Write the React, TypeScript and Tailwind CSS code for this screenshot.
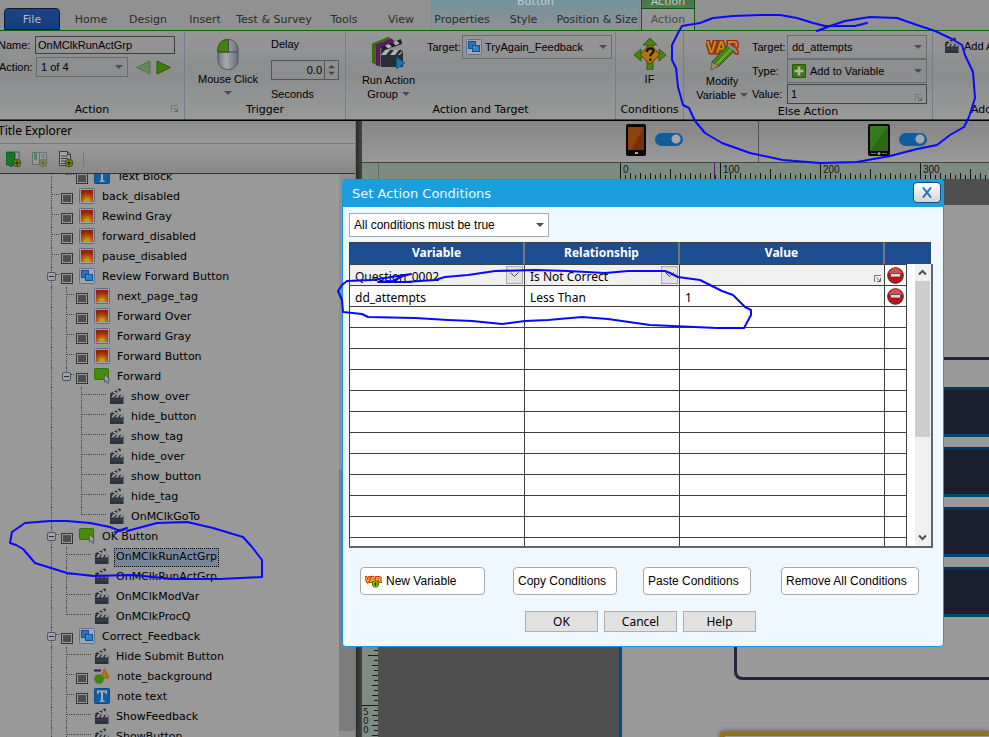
import React from 'react';
import { clsx } from 'clsx';

type Kind = 'image' | 'group' | 'text' | 'shape' | 'button' | 'action'

// t = branch, l = last branch, e = expander, x = last expander, v = line only, '' = blank
type Guide = 't' | 'l' | 'e' | 'x' | 'v' | ''

const nodes: { name: string, kind: Kind, guides: Guide[], selected?: boolean }[] = [
    { name: 'Text Block', kind: 'text', guides: ['v', 'l'] },
    { name: 'back_disabled', kind: 'image', guides: ['t'] },
    { name: 'Rewind Gray', kind: 'image', guides: ['t'] },
    { name: 'forward_disabled', kind: 'image', guides: ['t'] },
    { name: 'pause_disabled', kind: 'image', guides: ['t'] },
    { name: 'Review Forward Button', kind: 'group', guides: ['e'] },
    { name: 'next_page_tag', kind: 'image', guides: ['v', 't'] },
    { name: 'Forward Over', kind: 'image', guides: ['v', 't'] },
    { name: 'Forward Gray', kind: 'image', guides: ['v', 't'] },
    { name: 'Forward Button', kind: 'image', guides: ['v', 't'] },
    { name: 'Forward', kind: 'button', guides: ['v', 'x'] },
    { name: 'show_over', kind: 'action', guides: ['v', '', 't'] },
    { name: 'hide_button', kind: 'action', guides: ['v', '', 't'] },
    { name: 'show_tag', kind: 'action', guides: ['v', '', 't'] },
    { name: 'hide_over', kind: 'action', guides: ['v', '', 't'] },
    { name: 'show_button', kind: 'action', guides: ['v', '', 't'] },
    { name: 'hide_tag', kind: 'action', guides: ['v', '', 't'] },
    { name: 'OnMClkGoTo', kind: 'action', guides: ['v', '', 'l'] },
    { name: 'OK Button', kind: 'button', guides: ['e'] },
    { name: 'OnMClkRunActGrp', kind: 'action', guides: ['v', 't'], selected: true },
    { name: 'OnMClkRunActGrp', kind: 'action', guides: ['v', 't'] },
    { name: 'OnMClkModVar', kind: 'action', guides: ['v', 't'] },
    { name: 'OnMClkProcQ', kind: 'action', guides: ['v', 'l'] },
    { name: 'Correct_Feedback', kind: 'group', guides: ['e'] },
    { name: 'Hide Submit Button', kind: 'action', guides: ['v', 't'] },
    { name: 'note_background', kind: 'shape', guides: ['v', 't'] },
    { name: 'note text', kind: 'text', guides: ['v', 't'] },
    { name: 'ShowFeedback', kind: 'action', guides: ['v', 't'] },
    { name: 'ShowButton', kind: 'action', guides: ['v', 't'] },
]

function ClapperIcon() {
    return (
        <svg width="14" height="16" viewBox="0 0 14 16" className="shrink-0">
            <path d="M0 5.5 10 .3l1.2 2.2L1 7.2z" fill="#23272e" />
            <path d="M2.6 4.2l2 1.4 1.8-.9-2-1.5zM6 2.4l2.1 1.5 1.7-.8L7.800 1.500z" fill="#a9a9a9" />
            <path d="M0 6.800h13.500V16H0z" fill="#2b333f" />
            <path d="M3 6.800h2.500L3.800 9.500H1.200zM7.200 6.800h2.500L8 9.500H5.400zM11.300 6.800h2.200v.6l-1.300 2.100H9.700z" fill="#9c9c9c" />
            <path d="M1 12h12" stroke="#3c4653" />
        </svg>
    )
}

function GroupIcon() {
    return (
        <svg width="16" height="16" viewBox="0 0 16 16" className="shrink-0">
            <rect x=".5" y=".5" width="15" height="15" rx="1" fill="#a3a6ab" stroke="#66718a" />
            <rect x="2.500" y="2.500" width="7" height="7" fill="#2d73b8" stroke="#114f95" />
            <rect x="6.500" y="6.500" width="7" height="6" fill="#2f7fc4" stroke="#114f95" />
            <path d="M7 7h2.500v2.500H7z" fill="#3f95cf" />
        </svg>
    )
}

function NodeIcon({ kind }: { kind: Kind }) {
    if (kind === 'action') return <ClapperIcon />
    if (kind === 'group') return <GroupIcon />
    return (
        <svg width="16" height="16" viewBox="0 0 16 16" className="shrink-0">
            {kind === 'image' && <>
                <defs>
                    <radialGradient id="sunset" cx=".5" cy=".95" r=".85">
                        <stop offset="0" stopColor="#b5a522" />
                        <stop offset=".3" stopColor="#bd8119" />
                        <stop offset=".6" stopColor="#b34a10" />
                        <stop offset="1" stopColor="#941f02" />
                    </radialGradient>
                </defs>
                <rect x=".5" y=".5" width="15" height="15" rx="1" fill="#a3a3a3" stroke="#5e6b85" />
                <rect x="2" y="2" width="12" height="12" fill="url(#sunset)" />
                <path d="M5 14a3 3.500 0 0 1 6 0z" fill="#aaa422" />
            </>}
            {kind === 'text' && <>
                <rect x=".5" y=".5" width="15" height="15" rx="1" fill="#135ca0" stroke="#0c4c89" />
                <path d="M3 2.500h10V6h-1.200l-.6-1.800H9v8.300l1.500.4v1.100h-5v-1.100l1.500-.4V4.200H4.800L4.200 6H3z" fill="#a9adb1" />
            </>}
            {kind === 'shape' && <>
                <path d="M0 2.500h7" stroke="#3a0f6b" strokeWidth="2" />
                <path d="M10.500.5 15 10H7z" fill="#ad7d00" stroke="#a35b10" />
                <circle cx="5" cy="11" r="4.800" fill="#3d8410" />
            </>}
            {kind === 'button' && <>
                <rect x=".5" y=".5" width="14" height="11" rx="1" fill="#478c0d" stroke="#356f09" />
                <path d="M10.500 6v8l1.800-1.500 1.200 3 1.500-.7-1.200-2.800h2z" fill="#a5a9ae" stroke="#4a5262" strokeWidth=".8" />
            </>}
        </svg>
    )
}

function TreeGuide({ guide }: { guide: Guide }) {
    const half = guide === 'l' || guide === 'x'
    return (
        <span className="relative w-[15px] h-5 shrink-0">
            {guide !== '' && <span className={clsx('absolute left-[7px] top-0 border-l border-dotted border-[#444]', half ? 'h-2' : 'h-5')} />}
            {guide !== '' && guide !== 'v' && <span className="absolute left-[7px] top-[7px] w-2 border-t border-dotted border-[#444]" />}
            {(guide === 'e' || guide === 'x') &&
                <button aria-label="Collapse" className="absolute left-[3px] top-[5px] w-[9px] h-[9px] rounded-xs border border-[#4d5666] bg-[#9fa3a8] flex items-center justify-center">
                    <span className="w-[5px] h-px bg-[#1a2a48]" />
                </button>}
        </span>
    )
}

function TreeRow({ name, kind, guides, selected = false }: { name: string, kind: Kind, guides: Guide[], selected?: boolean }) {
    return (
        <li className="flex h-5 pl-11">
            {guides.map((guide, i) => <TreeGuide key={i} guide={guide} />)}
            {kind === 'action'
                ? <span className="w-[17px] mr-1 mt-[7px] border-t border-dotted border-[#444] shrink-0" />
                : <input type="checkbox" aria-label={name} className="appearance-none w-3 h-[11px] ml-[2px] mr-[6px] mt-[6px] border border-[#333] bg-[#4d4d4d] outline outline-1 -outline-offset-2 outline-[#999] shrink-0" />}
            <span className="mt-px"><NodeIcon kind={kind} /></span>
            <span className={clsx('ml-[5px] mt-px h-[19px] px-[2px] leading-[18px] whitespace-nowrap', selected && 'bg-[#78869b] outline outline-1 -outline-offset-1 outline-dotted outline-black')}>{name}</span>
        </li>
    )
}

function Caret() {
    return <svg width="8" height="4" viewBox="0 0 8 4" className="shrink-0 pointer-events-none"><path d="M0 0h8L4 4z" fill="#4d4d4d" /></svg>
}

function Launcher() {
    return (
        <svg width="7" height="7" viewBox="0 0 7 7" className="shrink-0">
            <path d="M.5 7V.5H7" fill="none" stroke="#777" />
            <path d="M2.500 2.500 6 6M6.500 3v3.500H3" fill="none" stroke="#666" />
        </svg>
    )
}

function Combo({ id, value, className, children }: { id: string, value: string, className: string, children?: React.ReactNode }) {
    return (
        <div className={clsx('flex items-center border border-[#6b6b6b] pr-[4px] text-black', className)}>
            {children}
            <select id={id} className="appearance-none flex-1 min-w-0 h-4 leading-4 focus:outline-none">
                <option>{value}</option>
            </select>
            <Caret />
        </div>
    )
}

function RibbonGroup({ title, className, launcher = false, children }: { title: string, className: string, launcher?: boolean, children: React.ReactNode }) {
    return (
        <section className={clsx('flex flex-col shrink-0 border-r border-[#6f7f92]', className)}>
            <div className="flex flex-1 pt-1">{children}</div>
            <div className="relative h-4 text-center leading-[14px] font-['DejaVu_Sans',sans-serif] text-[11px] text-black whitespace-nowrap">
                {title}
                {launcher && <button aria-label="More" className="absolute right-[6px] top-[2px]"><Launcher /></button>}
            </div>
        </section>
    )
}

function Tab({ label, className }: { label: string, className: string }) {
    return <button className={clsx('h-full pt-[10px] shrink-0 text-center whitespace-nowrap', className)}>{label}</button>
}

function RibbonTabs() {
    return (
        <nav className="flex h-[30px] bg-[#919191] font-['DejaVu_Sans',sans-serif] text-[11px] text-[#2b2b2b] overflow-hidden">
            <button className="mt-2 ml-1 w-14 shrink-0 rounded-t-sm border border-[#0d1a30] bg-linear-to-b from-[#1f4384] to-[#123d7f] text-[#b4b8c0] pt-[3px]">File</button>
            <Tab label="Home" className="w-[62px]" />
            <Tab label="Design" className="w-[52px]" />
            <Tab label="Insert" className="w-[62px]" />
            <Tab label="Test & Survey" className="w-[76px]" />
            <Tab label="Tools" className="w-[64px]" />
            <Tab label="View" className="w-[50px]" />
            <div className="relative flex w-[209px] ml-[5px] shrink-0 border-x border-[#71919a] bg-linear-to-b from-[#6f949d] to-[#919191]">
                <span className="absolute inset-x-0 -top-[5px] text-center leading-[14px] text-[#c4cdd0]">Button</span>
                <Tab label="Properties" className="w-[60px]" />
                <Tab label="Style" className="w-[63px]" />
                <Tab label="Position & Size" className="w-[84px]" />
            </div>
            <div className="relative flex w-[54px] ml-px shrink-0 border-x border-[#0b5c0b] bg-linear-to-b from-[#4a754e] to-[#668a69]">
                <span className="absolute inset-x-0 -top-[5px] text-center leading-[14px] text-[#c0cfc1]">Action</span>
                <button className="mt-2 w-full border-t border-[#0b5c0b] bg-[#969696] pt-[2px] text-[#4a4a4a]">Action</button>
            </div>
            <div className="flex-1" />
        </nav>
    )
}

function MouseIcon() {
    return (
        <svg width="22" height="31" viewBox="0 0 22 31">
            <defs>
                <linearGradient id="mouse" x1="0" x2="1"><stop offset="0" stopColor="#737780" /><stop offset=".4" stopColor="#a8a8ac" /><stop offset="1" stopColor="#686e7a" /></linearGradient>
            </defs>
            <rect x="1" y=".5" width="20" height="30" rx="9.500" fill="url(#mouse)" stroke="#4c5361" />
            <path d="M11.500.5H10.500A9.500 9.500 0 0 0 1 10v3h10.500z" fill="#448409" stroke="#2d5a09" />
            <path d="M1 13h20M11.500 1v12" stroke="#3d4450" fill="none" />
        </svg>
    )
}

function RunGroupIcon() {
    return (
        <svg width="33" height="32" viewBox="0 0 33 32">
            <path d="M0 7 17 0l3 4L3 10v17l-3-2z" fill="#426d0d" stroke="#2c4f08" strokeWidth=".6" />
            <path d="M4 8 20 2l3 4L8 11v18l-4-1z" fill="#5d1b67" stroke="#3b1044" strokeWidth=".6" />
            <path d="M9 10 29 2l1 5-20 7z" fill="#1d2025" />
            <path d="m13 8.500 4-1.600 3 3-4 1.500zM21 5.400l4-1.600 2.500 3-4 1.500z" fill="#b0b0b0" />
            <path d="M9 13h22v17H9z" fill="#262e3a" />
            <path d="M13 13h5l-4 5H9zM22 13h5l-4 5h-5zM31 13v1l-3 4h-2z" fill="#b0b0b0" />
            <path d="m24.500 20 8.500 6-8.500 6z" fill="#1476aa" stroke="#0c4e76" strokeWidth=".6" />
        </svg>
    )
}

function IfIcon() {
    return (
        <svg width="32" height="32" viewBox="0 0 32 32">
            <path d="m16 0 7 7h-4v18h0v7H13V7H9zM0 17l7-6v4h18v-4l7 6-7 6v-4H7v4z" fill="#448612" stroke="#274f08" strokeWidth=".8" />
            <rect x="9" y="9.500" width="14" height="14" rx="1.500" transform="rotate(45 16 16.500)" fill="#b17612" stroke="#734b06" />
            <path d="M12.800 14c.2-5 7-4.600 6.700-.8-.2 2.200-3.200 2.400-3.200 5M16.300 20.500v2.300" fill="none" stroke="#111" strokeWidth="2.300" />
        </svg>
    )
}

function ModifyVariableIcon() {
    return (
        <svg width="33" height="30" viewBox="0 0 33 30">
            <text x="0" y="13" fontSize="16" fontWeight="bold" fontFamily="Liberation Sans, sans-serif" fill="#c08b22" stroke="#97290d" strokeWidth="3" paintOrder="stroke">VAR</text>
            <path d="m6 22 15-16 7 5-15 15-6 2z" fill="#458613" stroke="#284e0a" />
            <path d="m10 25 15-16" stroke="#70a53b" strokeWidth="2" />
            <path d="m21 6 2-2 7 5-2 2z" fill="#878a8f" />
            <path d="m23 4 2-1 6 4-1 2z" fill="#a83341" />
            <path d="m6 22 7 4-8 4z" fill="#a38a61" stroke="#4c3a22" strokeWidth=".6" />
        </svg>
    )
}

function Ribbon() {
    return (
        <div className="relative flex h-[90px] border-y border-y-[#0b630b] border-b-[#33553a] bg-linear-to-b from-[#969696] via-[#8b8d8e] to-[#999] text-[11px] text-black overflow-hidden">
            <div className="absolute left-[641px] -top-px w-[54px] h-px bg-[#969696]" />
            <RibbonGroup title="Action" className="w-[185px]" launcher>
                <div className="flex flex-col gap-[3px] mt-px">
                    <div className="flex items-center h-[18px]">
                        <label htmlFor="name" className="w-[35px] -ml-[2px] mr-[2px] leading-4">Name:</label>
                        <input id="name" defaultValue="OnMClkRunActGrp" className="w-[140px] h-[18px] border border-[#3f3f3f] px-[2px]" />
                    </div>
                    <div className="flex items-center h-5">
                        <label htmlFor="action" className="w-[36px] -ml-px mr-px leading-4">Action:</label>
                        <Combo id="action" value="1 of 4" className="w-[92px] h-5 pl-1" />
                        <button aria-label="Previous action" className="ml-2"><svg width="15" height="15" viewBox="0 0 15 15"><path d="M.5 7.500 14 1v13z" fill="#668859" stroke="#507447" /></svg></button>
                        <button aria-label="Next action" className="ml-[5px]"><svg width="15" height="15" viewBox="0 0 15 15"><path d="M14.500 7.500 1 1v13z" fill="#3d7d0a" stroke="#2b5b08" /></svg></button>
                    </div>
                </div>
            </RibbonGroup>
            <RibbonGroup title="Trigger" className="w-[161px]">
                <button className="flex flex-col items-center w-[86px] pt-1 leading-[18px] whitespace-nowrap">
                    <MouseIcon />
                    <span>Mouse Click</span>
                    <span className="mt-[3px]"><Caret /></span>
                </button>
                <div className="flex flex-col">
                    <label htmlFor="delay" className="h-[25px] leading-[18px]">Delay</label>
                    <div className="flex h-5 w-[68px] border border-[#555]">
                        <input id="delay" defaultValue="0.0" className="w-[53px] pr-[2px] text-right border-r border-[#555]" />
                        <svg width="14" height="18" viewBox="0 0 14 18"><path d="M3.500 7 7 3.500l3.500 3.500zM3.500 11 7 14.500 10.500 11z" fill="#444" /></svg>
                    </div>
                    <span className="mt-[6px] leading-4">Seconds</span>
                </div>
            </RibbonGroup>
            <RibbonGroup title="Action and Target" className="w-[270px]">
                <button className="flex flex-col items-center w-[81px] pt-[2px] pl-1 leading-[14px] whitespace-nowrap">
                    <RunGroupIcon />
                    <span className="mt-1">Run Action</span>
                    <span className="flex items-center gap-1">Group <Caret /></span>
                </button>
                <label htmlFor="target" className="w-[35px] leading-6 whitespace-nowrap">Target:</label>
                <Combo id="target" value="TryAgain_Feedback" className="w-[150px] h-6 pl-[3px] gap-[3px]"><GroupIcon /></Combo>
            </RibbonGroup>
            <RibbonGroup title="Conditions" className="w-[68px]">
                <button className="flex flex-col items-center w-full pt-[3px]">
                    <IfIcon />
                    <span className="mt-[2px] leading-[14px]">IF</span>
                </button>
            </RibbonGroup>
            <RibbonGroup title="Else Action" className="w-[249px]">
                <button className="flex flex-col items-center w-[68px] pt-[5px] pl-2 leading-[14px] whitespace-nowrap">
                    <ModifyVariableIcon />
                    <span className="mt-1">Modify</span>
                    <span className="flex items-center gap-1">Variable <Caret /></span>
                </button>
                <div className="grid grid-cols-[35px_140px] auto-rows-min leading-6">
                    <label htmlFor="else-target">Target:</label>
                    <Combo id="else-target" value="dd_attempts" className="h-6 pl-1" />
                    <label htmlFor="else-type">Type:</label>
                    <Combo id="else-type" value="Add to Variable" className="h-6 pl-1 gap-1">
                        <svg width="14" height="14" viewBox="0 0 14 14" className="shrink-0"><path d="M.5.5h13v13H.5z" fill="#3d7b12" stroke="#2a5a0a" /><path d="M7 2.500v9M2.500 7h9" stroke="#b5b5b5" strokeWidth="2.500" /></svg>
                    </Combo>
                    <label htmlFor="else-value" className="leading-[22px]">Value:</label>
                    <div className="flex items-end h-5 mt-px border border-[#444] pr-1">
                        <input id="else-value" defaultValue="1" className="flex-1 min-w-0 h-full pl-[3px]" />
                        <span className="mb-[2px]"><Launcher /></span>
                    </div>
                </div>
            </RibbonGroup>
            <section className="flex flex-col flex-1 min-w-0 pl-3 overflow-hidden whitespace-nowrap">
                <button className="flex items-start gap-[5px] pt-[6px] flex-1 text-left leading-[18px]"><ClapperIcon /><span className="shrink-0">Add A</span></button>
                <div className="h-4 pl-[26px] leading-[14px] font-['DejaVu_Sans',sans-serif] text-[11px]">Add</div>
            </section>
        </div>
    )
}

function PlusBadge({ x }: { x: number }) {
    return <g transform={`translate(${x} 8)`}><circle cx="4" cy="4" r="3.800" fill="#758d12" stroke="#35500c" /><path d="M4 1.500v5M1.500 4h5" stroke="#15240a" /></g>
}

function Explorer() {
    return (
        <aside className="flex flex-col w-[355px] shrink-0 bg-[#999] font-['DejaVu_Sans',sans-serif] text-[11px] text-black">
            <h2 className="h-[23px] shrink-0 -indent-[2px] border-b border-[#777] bg-linear-to-b from-[#8b8b8b] to-[#999] font-['Noto_Sans',sans-serif] text-xs leading-[20px]">Title Explorer</h2>
            <div className="flex items-center gap-[10px] h-[30px] shrink-0 pl-[6px] border-b border-[#333] bg-linear-to-b from-[#999] to-[#888]">
                <button aria-label="Add chapter"><svg width="16" height="16" viewBox="0 0 16 16"><path d="M5 1h8v13H5z" fill="#999" stroke="#495565" /><path d="M0 1h4l5 1v12l-5 2V14H0z" fill="#16762a" stroke="#0c451a" strokeWidth=".7" /><PlusBadge x={7} /></svg></button>
                <button aria-label="Add section" className="opacity-50"><svg width="16" height="16" viewBox="0 0 16 16"><path d="M.5 1.500h7v12h-7zM7.500 1.500h7v12h-7z" fill="#a5a5a5" stroke="#385066" /><path d="M2 1h3v9L3.500 8 2 10z" fill="#16762a" /><path d="M9 4h4M9 6h4" stroke="#385066" /><PlusBadge x={7} /></svg></button>
                <button aria-label="Add page"><svg width="16" height="16" viewBox="0 0 16 16"><path d="M1.500.5h8l3 3v11h-11z" fill="#a5a5a5" stroke="#303b4c" /><path d="M9.500.5v3h3M3 5h7M3 7.500h7M3 10h5M3 12.500h4" fill="none" stroke="#303b4c" /><PlusBadge x={7} /></svg></button>
                <span className="w-px h-4 bg-[#777] -ml-px" />
            </div>
            <div className="flex flex-1 min-h-0 overflow-hidden">
                <ul className="flex-1 -mt-[7px]">
                    {nodes.map((node, i) => <TreeRow key={i} {...node} />)}
                </ul>
                <div className="w-4 bg-[#8f8f8f] flex flex-col justify-end pb-[6px]"><div className="h-[47%] bg-[#7c7c7c]" /></div>
            </div>
        </aside>
    )
}

function Toggle({ label }: { label: string }) {
    return <input type="checkbox" role="switch" aria-label={label} defaultChecked className="appearance-none w-7 h-[13px] rounded-full bg-[#115c9a] bg-[radial-gradient(circle_at_21px_6px,#a5a8ab_4px,transparent_5px)]" />
}

function HorizontalRuler() {
    const ticks = Array.from({ length: 200 }, (_, i) => i)
    return (
        <svg className="w-full h-4 bg-[#7d8b82] font-['DejaVu_Sans',sans-serif]">
            <path d="M16.500 0v16" stroke="#5f6b64" />
            {ticks.map(i => {
                const y = i % 20 === 0 ? 0 : i % 10 === 0 ? 6 : i % 2 === 0 ? 10 : 12
                return <path key={i} d={`M${258.5 + i * 5} ${y}V16`} stroke="#151515" />
            })}
            {[0, 100, 200, 300].map(n => <text key={n} x={261 + n} y="10" fontSize="10" fontFamily="Liberation Sans, sans-serif" fill="#151515">{n}</text>)}
            <path d="M352.500 0v16" stroke="#5c1273" />
        </svg>
    )
}

function VerticalRuler() {
    const ticks = Array.from({ length: 200 }, (_, i) => i)
    return (
        <svg className="w-4 h-full shrink-0 bg-[#7d8b82]">
            {ticks.map(i => {
                const x = i % 20 === 0 ? 0 : i % 10 === 0 ? 6 : i % 2 === 0 ? 10 : 12
                return <path key={i} d={`M${x} ${26.5 + i * 5}H16`} stroke="#151515" />
            })}
            {['5', '0', '0'].map((d, i) => <text key={i} x="1" y={536 + i * 9} fontSize="9" fontFamily="DejaVu Sans, sans-serif" fill="#151515">{d}</text>)}
        </svg>
    )
}

function Workspace() {
    return (
        <main className="flex flex-col flex-1 min-w-0">
            <div className="flex items-center h-[41px] shrink-0 bg-linear-to-b from-[#858585] to-[#999]">
                <div className="flex items-center gap-[9px] h-full w-[397px] pl-[264px] pb-1 border-r border-[#555]">
                    <svg width="20" height="32" viewBox="0 0 20 32"><rect width="20" height="32" rx="2" fill="#080808" /><path d="M2 3h16v23H2z" fill="#8f420c" /><path d="M18 3v23H5z" fill="#70330b" /><path d="M9 28h3v2H9z" fill="#aaa" /></svg>
                    <Toggle label="Phone layout" />
                </div>
                <div className="flex items-center gap-[9px] h-full pl-[109px] pb-1">
                    <svg width="22" height="32" viewBox="0 0 22 32"><rect width="22" height="32" rx="2" fill="#080808" /><path d="M2 2h18v25H2z" fill="#347b1e" /><path d="M20 2v25H2z" fill="#2b6917" /><path d="M3 29.500h5M14 29.500h5" stroke="#777" /><circle cx="11" cy="29.500" r="1.500" fill="#999" /></svg>
                    <Toggle label="Tablet layout" />
                </div>
            </div>
            <div className="h-[17px] shrink-0 border-t border-[#444]"><HorizontalRuler /></div>
            <div className="flex flex-1 min-h-0 overflow-hidden">
                <VerticalRuler />
                <div className="flex-1 flex min-w-0 pt-[26px] pl-[241px] bg-[#4f4f4f]">
                    <div className="flex-1 flex flex-col min-w-0 border-l-[3px] border-[#004f87] bg-[#999] overflow-hidden">
                        <div className="ml-28 mt-[152px] h-[323px] shrink-0 flex flex-col gap-[10px] pt-[27px] pl-6 border-[3px] border-r-0 border-[#24263f] rounded-l-lg">
                            {[0, 1, 2, 3].map(i => <div key={i} className="h-[50px] shrink-0 bg-[#1c1f30] border-y-[3px] border-t-[#003a5c] border-b-[#004b6c]" />)}
                        </div>
                        <div className="ml-[98px] mt-[51px] h-20 shrink-0 border-[5px] border-r-0 border-[#8f741a] rounded-tl-sm shadow-[0_0_4px_#555]" />
                    </div>
                </div>
            </div>
        </main>
    )
}

function RemoveButton() {
    return (
        <button aria-label="Remove condition" className="block mx-auto">
            <svg width="17" height="17" viewBox="0 0 17 17"><circle cx="8.500" cy="8.500" r="7.800" fill="#b3191c" stroke="#70090b" /><path d="M2 7a6.500 6 0 0 1 13 0z" fill="#cf5355" /><rect x="3.500" y="6.500" width="10" height="3.500" rx=".5" fill="#ddd" stroke="#6d1113" strokeWidth=".7" /></svg>
        </button>
    )
}

function CellArrow() {
    return (
        <button aria-label="Open list" className="flex items-center justify-center w-[17px] h-[18px] border border-[#aaa] bg-[#e1e1e1]">
            <svg width="9" height="6" viewBox="0 0 9 6"><path d="M.5.5l4 4 4-4" fill="none" stroke="#444" /></svg>
        </button>
    )
}

function ConditionsTable() {
    const cell = 'h-[21px] border-r border-b border-[#3f3f3f] p-0'
    const textCell = 'h-[21px] border-r border-b border-[#3f3f3f] p-0 pl-[5px] pt-1 leading-4'
    const head = 'h-[23px] border-t border-t-[#3f3f3f] border-b border-b-[#3f3f3f] bg-[#1c4e91] p-0 pb-[2px] leading-[16px] font-bold text-white text-center'
    return (
        <div className="flex h-[306px] mt-[5px] border-b-2 border-[#646464] bg-white overflow-hidden">
            <table className="w-[558px] table-fixed border-separate border-spacing-0 border-l border-[#3f3f3f] self-start">
                <colgroup><col className="w-[175px]" /><col className="w-[155px]" /><col className="w-[205px]" /><col /></colgroup>
                <thead>
                    <tr>
                        <th className={clsx(head, 'border-r-2 border-r-[#777]')}>Variable</th>
                        <th className={clsx(head, 'border-r-2 border-r-[#777]')}>Relationship</th>
                        <th className={clsx(head, 'border-r-2 border-r-[#777]')}>Value</th>
                        <th className={head} aria-label="Remove" />
                    </tr>
                </thead>
                <tbody>
                    <tr className="bg-[#f0f0f0]">
                        <td className={cell}><div className="flex justify-between items-center h-5 pl-[5px] pr-px"><span className="pt-1 leading-4">Question_0002</span><CellArrow /></div></td>
                        <td className={cell}><div className="flex justify-between items-center h-5 pl-[5px] pr-px"><span className="pt-1 leading-4">Is Not Correct</span><CellArrow /></div></td>
                        <td className={cell}><div className="flex justify-end items-end h-5 p-[3px]"><Launcher /></div></td>
                        <td className={clsx(cell, 'bg-white')}><RemoveButton /></td>
                    </tr>
                    <tr>
                        <td className={textCell}>dd_attempts</td>
                        <td className={textCell}>Less Than</td>
                        <td className={textCell}>1</td>
                        <td className={cell}><RemoveButton /></td>
                    </tr>
                    {Array.from({ length: 12 }, (_, i) => (
                        <tr key={i}><td className={cell} /><td className={cell} /><td className={cell} /><td className={cell} /></tr>
                    ))}
                </tbody>
            </table>
            <div className="flex flex-col flex-1">
                <div className="h-[22px] bg-[#1c4e91] border-t border-[#3f3f3f] mr-[2px]" />
                <div className="flex-1 flex flex-col items-center ml-2 pr-px border-r-2 border-[#646464] bg-[#f0f0f0]">
                    <svg width="15" height="17" viewBox="0 0 15 17" className="shrink-0"><path d="M4 10.500 7.500 7l3.500 3.500" fill="none" stroke="#505050" strokeWidth="2" /></svg>
                    <div className="w-full h-[156px] bg-[#cdcdcd]" />
                    <svg width="15" height="17" viewBox="0 0 15 17" className="mt-auto shrink-0"><path d="M4 6.500 7.500 10 11 6.500" fill="none" stroke="#505050" strokeWidth="2" /></svg>
                </div>
            </div>
        </div>
    )
}

function VarBadge() {
    return (
        <svg width="17" height="14" viewBox="0 0 17 14">
            <text x="0" y="8" fontSize="8" fontWeight="bold" fontFamily="Liberation Sans, sans-serif" fill="#ffc02b" stroke="#cf3a12" strokeWidth="2" paintOrder="stroke">VAR</text>
            <circle cx="10.500" cy="10" r="3.200" fill="#a6d21b" stroke="#3f6d0c" />
            <path d="M10.500 8v4M8.500 10h4" stroke="#28450a" />
        </svg>
    )
}

function ConditionsDialog() {
    const action = 'h-7 shrink-0 rounded-sm border border-[#aaa] bg-white pl-1 text-left whitespace-nowrap'
    const plain = 'w-[73px] h-[21px] border border-[#adadad] bg-[#e1e1e1] font-["Noto_Sans",sans-serif] pt-px'
    return (
        <div role="dialog" aria-label="Set Action Conditions" className="absolute left-[342px] top-[179px] w-[602px] h-[468px] rounded border border-[#129bd9] bg-[#eff7ff] text-xs text-black">
            <div className="flex justify-between h-[27px] pl-[9px] pr-[2px] bg-[#199fde]">
                <h1 className="font-['DejaVu_Sans',sans-serif] text-[13px] leading-[27px] text-[#eff7ff]">Set Action Conditions</h1>
                <button aria-label="Close" className="flex items-center justify-center w-7 h-[21px] mt-[2px] rounded border border-[#22477c] bg-linear-to-b from-white to-[#d5d5d8]">
                    <svg width="10" height="11" viewBox="0 0 10 11"><path d="m1 .5 8 10M9 .5l-8 10" stroke="#1a76c8" strokeWidth="2" /></svg>
                </button>
            </div>
            <div className="pl-[6px] pr-[10px] pt-[6px]">
                <Combo id="match" value="All conditions must be true" className="w-[200px] h-6 pl-1 bg-white border-[#aaa]" />
                <div className="font-['Noto_Sans',sans-serif] text-xs"><ConditionsTable /></div>
            </div>
            <div className="flex mt-[19px] pl-[17px]">
                <button className={clsx(action, 'flex items-center gap-1 w-[125px]')}><VarBadge />New Variable</button>
                <button className={clsx(action, 'w-[104px] ml-7')}>Copy Conditions</button>
                <button className={clsx(action, 'w-[108px] ml-[26px]')}>Paste Conditions</button>
                <button className={clsx(action, 'w-[138px] ml-[30px]')}>Remove All Conditions</button>
            </div>
            <div className="flex gap-[6px] mt-4 pl-[182px]">
                <button className={plain}>OK</button>
                <button className={plain}>Cancel</button>
                <button className={plain}>Help</button>
            </div>
        </div>
    )
}

function InkNotes() {
    return (
        <svg width="989" height="737" viewBox="0 0 989 737" className="absolute left-0 top-0 pointer-events-none" fill="none" stroke="#0909fa" strokeWidth="2" strokeLinejoin="round" strokeLinecap="round">
            <path d="M867 23 863 24 855 26 843 26 825 26 813 23 797 18 780 15 760 15 733 16 713 18 700 23 682 26 678 33 672 45 672 60 676 68 678 87 683 105 689 108 695 121 705 133 722 143 750 153 783 160 820 163 857 162 890 156 917 149 937 145 950 135 964 127 969 117 975 98 973 72 965 55 962 45 950 38 935 31 917 25 897 18 870 17 845 21 830 26 817 31 823 29 827 26" />
            <path d="M411 274 403 276 393 281 378 282 405 282 435 280 445 277 468 275 495 271 535 270 568 271 605 273 628 271 665 271 670 273 678 277 700 280 722 291 733 295 745 307 751 310 751 315 744 328 717 328 650 325 608 319 582 317 548 320 525 321 502 324 472 321 448 320 415 318 368 317 362 314 343 312 342 300 338 291 342 285 347 281 372 280 411 274" />
            <path d="M115 532 127 528 120 531 110 527 90 523 67 521 50 521 25 523 12 532 10 543 16 545 23 549 35 563 67 573 93 576 133 575 173 579 220 579 262 577 262 560 252 547 243 537 213 528 187 522 157 523 127 531" />
        </svg>
    )
}

export default function App() {
    return (
        <div className="relative flex flex-col h-screen overflow-hidden bg-[#999] font-['Liberation_Sans',Arial,sans-serif]">
            <RibbonTabs />
            <Ribbon />
            <div className="flex flex-1 min-h-0 border-t border-black">
                <Explorer />
                <div className="w-[7px] shrink-0 border-l border-[#777] bg-linear-to-r from-[#2c2c2c] to-[#444]" />
                <Workspace />
            </div>
            <ConditionsDialog />
            <InkNotes />
        </div>
    )
}
